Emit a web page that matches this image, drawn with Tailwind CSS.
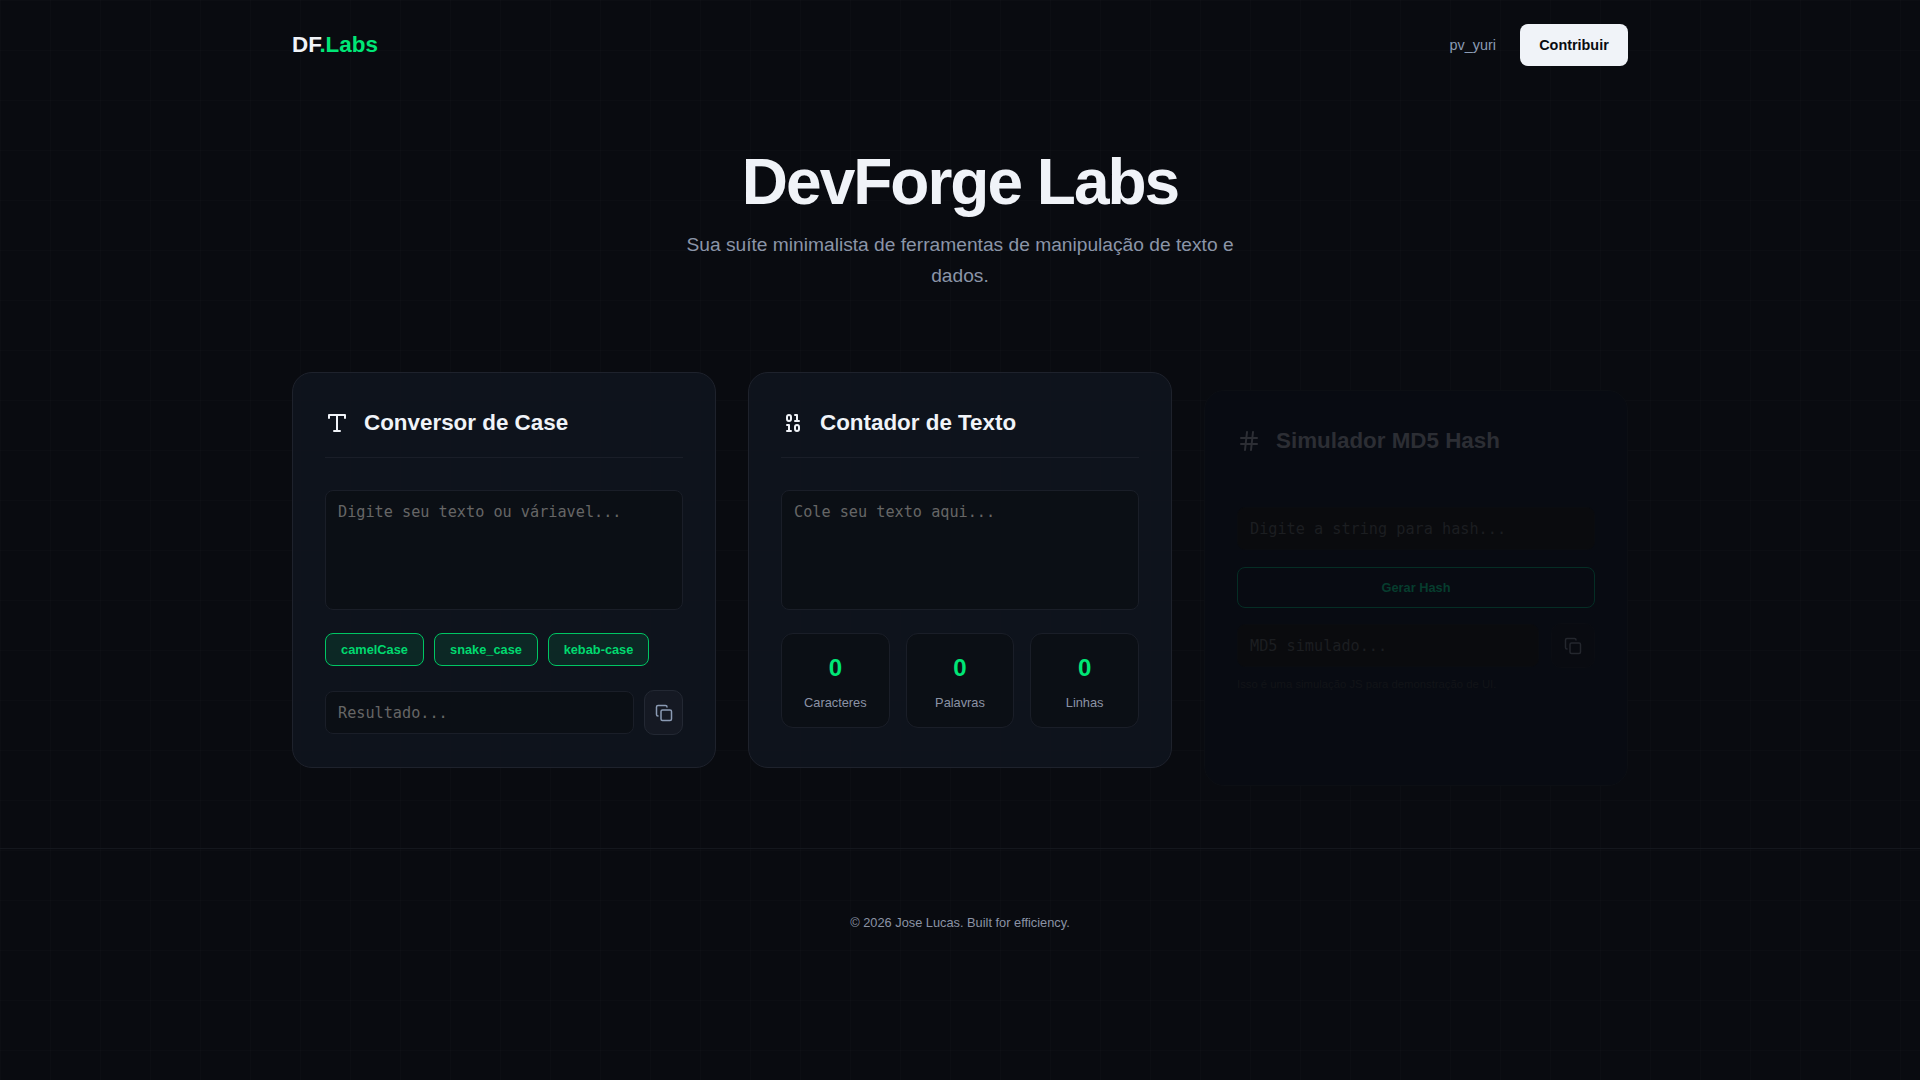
<!DOCTYPE html>
<html lang="pt-BR">
<head>
  <meta charset="UTF-8" />
  <meta name="viewport" content="width=device-width, initial-scale=1.0"/>
  <title>DevForge Labs</title>
  <script src="https://cdn.jsdelivr.net/npm/@tailwindcss/browser@4"></script>
</head>
<body class="min-h-screen bg-[#090b10] bg-[linear-gradient(rgba(255,255,255,0.012)_1px,transparent_1px),linear-gradient(90deg,rgba(255,255,255,0.012)_1px,transparent_1px)] bg-[size:50px_50px] font-['Liberation_Sans',sans-serif] text-[#f0f3f8]">

  <nav class="mx-auto flex max-w-[1400px] items-center justify-between px-8 py-6">
    <div class="text-[22.4px] leading-[30px] font-bold">DF<span class="text-[#00e676]">.Labs</span></div>
    <div class="flex items-center gap-6">
      <a href="#" class="pt-0.5 text-[14.4px] text-[#8b9bb4]">pv_yuri</a>
      <button class="h-[42px] w-[108px] rounded-lg bg-[#f0f3f8] pt-0.5 text-[14.4px] font-bold text-[#0a0c10]">Contribuir</button>
    </div>
  </nav>

  <header class="pt-[57px] pb-[81px] text-center">
    <h1 class="text-[64px] leading-[70px] font-bold tracking-[-2px]">DevForge Labs</h1>
    <p class="mx-auto mt-3 max-w-[600px] text-[19.2px] leading-[31px] text-[#8b95a8]">Sua suíte minimalista de ferramentas de manipulação de texto e dados.</p>
  </header>

  <main class="mx-auto grid max-w-[1400px] grid-cols-3 gap-8 px-8">

    <!-- case converter -->
    <section class="rounded-[20px] border border-[#1e222c] bg-[#10141e]/90 p-8">
      <div class="flex h-[53px] items-center gap-[15px] border-b border-[#1a1e28] pb-4">
        <svg class="h-6 w-6" viewBox="0 0 24 24" fill="none" stroke="#f0f3f8" stroke-width="2" stroke-linecap="round" stroke-linejoin="round"><polyline points="4 7 4 4 20 4 20 7"/><line x1="9" y1="20" x2="15" y2="20"/><line x1="12" y1="4" x2="12" y2="20"/></svg>
        <h2 class="text-[22.4px] font-bold">Conversor de Case</h2>
      </div>
      <textarea placeholder="Digite seu texto ou váriavel..." class="mt-8 block h-[120px] w-full resize-none rounded-lg border border-[#1a1e28] bg-[#0b0f15] px-3 py-2.5 font-['DejaVu_Sans_Mono',monospace] text-[15.2px] placeholder:text-[#666]"></textarea>
      <div class="mt-[23px] flex gap-2.5">
        <button class="h-[33px] w-[99px] rounded-lg border border-[#00c563] bg-[#00e676]/10 text-[12.8px] font-bold text-[#00d96f]">camelCase</button>
        <button class="h-[33px] w-[104px] rounded-lg border border-[#00c563] bg-[#00e676]/10 text-[12.8px] font-bold text-[#00d96f]">snake_case</button>
        <button class="h-[33px] w-[101px] rounded-lg border border-[#00c563] bg-[#00e676]/10 text-[12.8px] font-bold text-[#00d96f]">kebab-case</button>
      </div>
      <div class="mt-6 flex items-center gap-2.5">
        <input placeholder="Resultado..." class="h-[43px] min-w-0 flex-1 rounded-lg border border-[#1a1e28] bg-[#0b0f15] px-3 font-['DejaVu_Sans_Mono',monospace] text-[15.2px] placeholder:text-[#666]" />
        <button class="flex h-[45px] w-[39px] items-center justify-center rounded-[10px] border border-[#232833] bg-[#151923]">
          <svg class="h-[18px] w-[18px]" viewBox="0 0 24 24" fill="none" stroke="#8b9bb4" stroke-width="2" stroke-linecap="round" stroke-linejoin="round"><rect x="8" y="8" width="14" height="14" rx="2"/><path d="M4 16c-1.1 0-2-.9-2-2V4c0-1.1.9-2 2-2h10c1.1 0 2 .9 2 2"/></svg>
        </button>
      </div>
    </section>

    <!-- text counter -->
    <section class="rounded-[20px] border border-[#1e222c] bg-[#10141e]/90 p-8">
      <div class="flex h-[53px] items-center gap-[15px] border-b border-[#1a1e28] pb-4">
        <svg class="h-6 w-6" viewBox="0 0 24 24" fill="none" stroke="#f0f3f8" stroke-width="2" stroke-linecap="round" stroke-linejoin="round"><rect x="14" y="14" width="4" height="6" rx="2"/><rect x="6" y="4" width="4" height="6" rx="2"/><path d="M6 20h4"/><path d="M14 10h4"/><path d="M6 14h2v6"/><path d="M14 4h2v6"/></svg>
        <h2 class="text-[22.4px] font-bold">Contador de Texto</h2>
      </div>
      <textarea placeholder="Cole seu texto aqui..." class="mt-8 block h-[120px] w-full resize-none rounded-lg border border-[#1a1e28] bg-[#0b0f15] px-3 py-2.5 font-['DejaVu_Sans_Mono',monospace] text-[15.2px] placeholder:text-[#666]"></textarea>
      <div class="mt-[23px] grid grid-cols-3 gap-4">
        <div class="flex h-[95px] flex-col items-center rounded-xl border border-[#1a1e28] bg-[#0b0f15] pt-5">
          <div class="text-2xl leading-7 font-bold text-[#00e676]">0</div>
          <div class="mt-[11px] text-[12.8px] text-[#8b93a5]">Caracteres</div>
        </div>
        <div class="flex h-[95px] flex-col items-center rounded-xl border border-[#1a1e28] bg-[#0b0f15] pt-5">
          <div class="text-2xl leading-7 font-bold text-[#00e676]">0</div>
          <div class="mt-[11px] text-[12.8px] text-[#8b93a5]">Palavras</div>
        </div>
        <div class="flex h-[95px] flex-col items-center rounded-xl border border-[#1a1e28] bg-[#0b0f15] pt-5">
          <div class="text-2xl leading-7 font-bold text-[#00e676]">0</div>
          <div class="mt-[11px] text-[12.8px] text-[#8b93a5]">Linhas</div>
        </div>
      </div>
    </section>

    <!-- md5, still fading in when the shot was taken -->
    <section class="translate-y-[18px] rounded-[20px] border border-[#0c0f14] bg-[#080b12] p-8">
      <div class="flex h-[52px] items-center gap-[15px] pb-4">
        <svg class="h-6 w-6" viewBox="0 0 24 24" fill="none" stroke="#2c2e34" stroke-width="2" stroke-linecap="round" stroke-linejoin="round"><line x1="4" y1="9" x2="20" y2="9"/><line x1="4" y1="15" x2="20" y2="15"/><line x1="10" y1="3" x2="8" y2="21"/><line x1="16" y1="3" x2="14" y2="21"/></svg>
        <h2 class="text-[22.4px] font-bold text-[#2c2e34]">Simulador MD5 Hash</h2>
      </div>
      <input placeholder="Digite a string para hash..." class="mt-8 block h-[43px] w-full rounded-lg border border-[#0a0c10] bg-[#0a0b0e] px-3 font-['DejaVu_Sans_Mono',monospace] text-[15.2px] placeholder:text-[#1c1e21]" />
      <button class="mt-[17px] block h-[41px] w-full rounded-lg border border-[#052e25] text-[12.8px] font-bold text-[#063d2e]">Gerar Hash</button>
      <div class="mt-[15px] flex items-center gap-3">
        <input placeholder="MD5 simulado..." class="h-[43px] min-w-0 flex-1 rounded-lg border border-[#0a0c10] bg-[#0a0b0e] px-3 font-['DejaVu_Sans_Mono',monospace] text-[15.2px] placeholder:text-[#1c1e21]" />
        <button class="flex h-[45px] w-[44px] items-center justify-center rounded-[10px] border border-[#0b0d13] bg-[#090b11]">
          <svg class="h-[18px] w-[18px]" viewBox="0 0 24 24" fill="none" stroke="#24272e" stroke-width="2" stroke-linecap="round" stroke-linejoin="round"><rect x="8" y="8" width="14" height="14" rx="2"/><path d="M4 16c-1.1 0-2-.9-2-2V4c0-1.1.9-2 2-2h10c1.1 0 2 .9 2 2"/></svg>
        </button>
      </div>
      <p class="mt-2 text-[11.3px] leading-4 text-[#121418]">Isso é uma simulação JS para demonstração de UI.</p>
    </section>

  </main>

  <footer class="mt-20 border-t border-[#14171d] py-16 text-center text-[12.8px] leading-5 text-[#8b93a5]">© 2026 Jose Lucas. Built for efficiency.</footer>

</body>
</html>
